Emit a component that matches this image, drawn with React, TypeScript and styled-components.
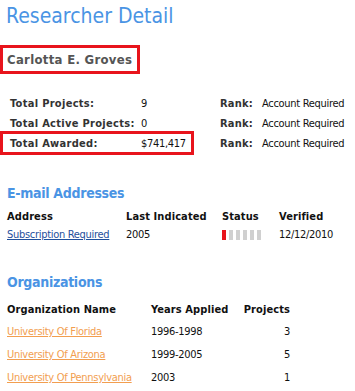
import React from "react";
import styled, { createGlobalStyle } from "styled-components";

const Global = createGlobalStyle`
  html, body { margin: 0; padding: 0; background: #fff; }
  body { font-family: "DejaVu Sans Condensed", "DejaVu Sans", sans-serif; font-size: 11px; color: #000; letter-spacing: -0.3px; }
`;

const Page = styled.div`
  width: 355px;
  height: 391px;
  overflow: hidden;
  padding-top: 3px;
  box-sizing: border-box;
`;

const Title = styled.h1`
  margin: 0 0 0 6px;
  font-size: 21px;
  font-weight: normal;
  line-height: 27px;
  letter-spacing: 0;
  color: #4a94e4;
`;

const NameBox = styled.div`
  display: inline-block;
  margin-top: 15px;
  border: 3px solid #e8141c;
  padding: 2px 5px 2px 4px;
  font-size: 13px;
  font-weight: bold;
  line-height: 19px;
  letter-spacing: 0.3px;
  color: #555;
`;

const Stats = styled.div`
  margin-top: 19px;
  display: flex;
  flex-direction: column;
`;

const StatRow = styled.div`
  display: flex;
  align-items: center;
  height: 20px;
`;

const StatLeft = styled.div<{ $hl?: boolean }>`
  display: flex;
  align-items: center;
  box-sizing: border-box;
  width: 194px;
  height: 24px;
  margin: -2px 0;
  padding-left: 7px;
  border: 3px solid ${(p) => (p.$hl ? "#e8141c" : "transparent")};
`;

const Label = styled.span`
  width: 131px;
  font-weight: bold;
  letter-spacing: 0.3px;
  color: #333;
`;

const Value = styled.span`
  color: #111;
`;

const Rank = styled.span`
  margin-left: 26px;
  width: 42px;
  font-weight: bold;
  letter-spacing: 0.2px;
  color: #333;
`;

const Section = styled.section<{ $top: number }>`
  margin-top: ${(p) => p.$top}px;
  padding-left: 7px;
`;

const SectionTitle = styled.h2<{ $gap: number }>`
  margin: 0 0 ${(p) => p.$gap}px 0;
  font-size: 14px;
  font-weight: bold;
  line-height: 20px;
  letter-spacing: -0.3px;
  color: #4a94e4;
`;

const Grid = styled.div<{ $cols: string }>`
  display: grid;
  grid-template-columns: ${(p) => p.$cols};
  align-items: center;
`;

const Head = styled.div<{ $right?: boolean }>`
  font-weight: bold;
  letter-spacing: 0.1px;
  color: #111;
  height: 20px;
  line-height: 20px;
  white-space: nowrap;
  text-align: ${(p) => (p.$right ? "right" : "left")};
`;

const Cell = styled.div<{ $right?: boolean; $h?: number }>`
  color: #111;
  height: ${(p) => p.$h ?? 20}px;
  line-height: ${(p) => p.$h ?? 20}px;
  white-space: nowrap;
  text-align: ${(p) => (p.$right ? "right" : "left")};
`;

const BlueLink = styled.a`
  color: #1f4f9c;
  text-decoration: underline;
`;

const OrangeLink = styled.a`
  color: #f29e50;
  text-decoration: underline;
`;

const Bars = styled.div`
  display: flex;
  gap: 3px;
  align-items: center;
  height: 16px;
`;

const Bar = styled.span<{ $on?: boolean }>`
  display: block;
  width: 4px;
  height: 10px;
  background: ${(p) => (p.$on ? "#e8141c" : "#d0d0d0")};
`;

const stats = [
  { label: "Total Projects:", value: "9" },
  { label: "Total Active Projects:", value: "0" },
  { label: "Total Awarded:", value: "$741,417", hl: true },
];

const orgs = [
  { name: "University Of Florida", years: "1996-1998", n: 3 },
  { name: "University Of Arizona", years: "1999-2005", n: 5 },
  { name: "University Of Pennsylvania", years: "2003", n: 1 },
];

export default function App() {
  return (
    <Page>
      <Global />
      <Title>Researcher Detail</Title>
      <NameBox>Carlotta E. Groves</NameBox>
      <Stats>
        {stats.map((s) => (
          <StatRow key={s.label}>
            <StatLeft $hl={s.hl}>
              <Label>{s.label}</Label>
              <Value>{s.value}</Value>
            </StatLeft>
            <Rank>Rank:</Rank>
            <Value>Account Required</Value>
          </StatRow>
        ))}
      </Stats>
      <Section $top={30}>
        <SectionTitle $gap={4}>E-mail Addresses</SectionTitle>
        <Grid $cols="119px 96px 57px auto">
          <Head>Address</Head>
          <Head>Last Indicated</Head>
          <Head>Status</Head>
          <Head>Verified</Head>
          <Cell $h={16}>
            <BlueLink href="#">Subscription Required</BlueLink>
          </Cell>
          <Cell $h={16}>2005</Cell>
          <Bars>
            {[true, false, false, false, false, false].map((on, i) => (
              <Bar key={i} $on={on} />
            ))}
          </Bars>
          <Cell $h={16}>12/12/2010</Cell>
        </Grid>
      </Section>
      <Section $top={29}>
        <SectionTitle $gap={8}>Organizations</SectionTitle>
        <Grid $cols="144px 92px 47px">
          <Head>Organization Name</Head>
          <Head>Years Applied</Head>
          <Head $right>Projects</Head>
          {orgs.map((o) => (
            <React.Fragment key={o.name}>
              <Cell $h={23}>
                <OrangeLink href="#">{o.name}</OrangeLink>
              </Cell>
              <Cell $h={23}>{o.years}</Cell>
              <Cell $h={23} $right>
                {o.n}
              </Cell>
            </React.Fragment>
          ))}
        </Grid>
      </Section>
    </Page>
  );
}
